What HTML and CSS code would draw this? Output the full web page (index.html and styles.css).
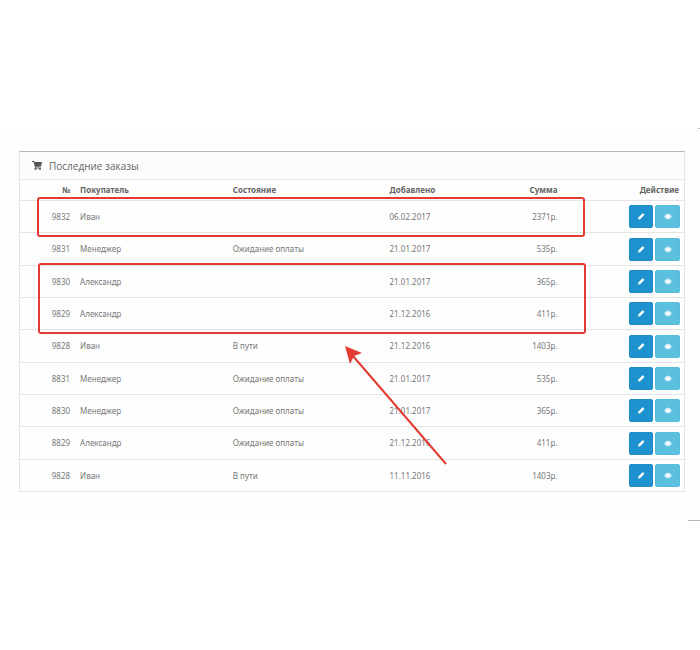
FILE: index.html
```html
<!DOCTYPE html>
<html lang="ru">
<head>
  <meta charset="UTF-8">
  <title>Последние заказы</title>
  <link rel="stylesheet" href="styles.css">
</head>
<body>
  <!-- иконки -->
  <svg class="sprite" aria-hidden="true">
    <symbol id="pencil" viewBox="0 0 16 16">
      <path d="M1 15l1-5 8-8 4 4-8 8zM10 2l1-1q1-1 2 0l2 2q1 1 0 2l-1 1z"/>
    </symbol>
    <symbol id="eye" viewBox="0 0 18 14">
      <path fill-opacity=".65" d="M0 7q4-7 9-7t9 7q-4 7-9 7T0 7z"/>
      <circle cx="9" cy="7" r="4"/>
    </symbol>
  </svg>

  <main class="content">
    <section class="panel">
      <header class="panel-heading">
        <svg class="cart" viewBox="0 0 20 18" aria-hidden="true">
          <path d="M0 0h4l1 2h15l-2 9-11 1v1h11v2H5l1-3L3 2H0z"/>
          <circle cx="7" cy="16" r="2"/>
          <circle cx="16" cy="16" r="2"/>
        </svg>
        <h3>Последние заказы</h3>
      </header>

      <table class="orders">
        <thead>
          <tr>
            <th class="col-id right">№</th>
            <th class="col-name">Покупатель</th>
            <th class="col-status">Состояние</th>
            <th class="col-date">Добавлено</th>
            <th class="col-sum right">Сумма</th>
            <th class="right">Действие</th>
          </tr>
        </thead>
        <tbody id="orders"></tbody>
      </table>

      <div class="mark mark-one"></div>
      <div class="mark mark-two"></div>
      <svg class="arrow" viewBox="0 0 104 120" aria-hidden="true">
        <path class="arrow-line" d="M8 10L101 118"/>
        <path class="arrow-head" d="M0 0l17 7-8 3-4 8z"/>
      </svg>
    </section>
    <span class="edge edge-top"></span>
    <span class="edge edge-bottom"></span>
  </main>

  <script src="script.js"></script>
</body>
</html>
```
FILE: styles.css
```css
* {
  box-sizing: border-box;
}

body {
  margin: 0;
  background: #fff;
  color: #666;
  font-family: "Noto Sans", "Open Sans", sans-serif;
  font-size: 8px;
  line-height: 12px;
}

.sprite {
  display: none;
}

.content {
  position: relative;
  margin-top: 128px;
  padding: 23px 15px 29px 19px;
  background: #fefefe;
}

.panel {
  position: relative;
  border: 1px solid #e4e4e4;
  border-top-color: #b4b4b4;
}

.panel-heading {
  display: flex;
  align-items: center;
  gap: 7px;
  height: 28px;
  padding: 0 12px;
  background: #fcfcfc;
  border-bottom: 1px solid #e8e8e8;
}

.panel-heading h3 {
  margin: 0;
  font-family: "Open Sans", "Noto Sans", sans-serif;
  font-size: 10px;
  font-weight: 400;
}

.cart {
  width: 10px;
  height: 9px;
  fill: #555;
}

.orders {
  width: 100%;
  border-collapse: collapse;
  table-layout: fixed;
}

.orders th,
.orders td {
  padding: 0 5px;
  text-align: left;
  white-space: nowrap;
  border-bottom: 1px solid #e4e4e4;
}

.orders tbody tr:last-child td {
  border-bottom: 0;
}

.orders th {
  height: 20px;
}

.orders td {
  height: 32px;
  padding-top: 1px;
  color: #777;
}

.orders tr:nth-child(3n+2) td {
  height: 33px;
}

.orders td:last-child {
  padding-right: 4px;
}

.orders .right {
  text-align: right;
}

.col-id { width: 8.3%; }
.col-name { width: 23%; }
.col-status { width: 23.6%; }
.col-date { width: 13%; }
.col-sum { width: 13.8%; }

.actions {
  display: flex;
  justify-content: flex-end;
  gap: 2px;
}

.btn {
  display: flex;
  align-items: center;
  justify-content: center;
  width: 24px;
  height: 23px;
  padding: 0;
  border: 1px solid #1d8bc7;
  border-radius: 2px;
  background: #1e91cf;
  cursor: pointer;
}

.btn svg {
  width: 8px;
  height: 7px;
  fill: #fff;
}

.btn-view {
  width: 25px;
  background: #5bc0de;
  border-color: #56bcdb;
}

/* выделение поверх таблицы */
.mark {
  position: absolute;
  left: 17px;
  right: 99px;
  border: 2px solid #e23c32;
  border-radius: 3px;
}

.mark-one {
  top: 45px;
  height: 40px;
}

.mark-two {
  top: 111px;
  left: 18px;
  right: 98px;
  height: 71px;
}

.arrow {
  position: absolute;
  top: 194px;
  left: 325px;
  width: 104px;
  height: 120px;
}

.arrow-line {
  fill: none;
  stroke: #e23c32;
  stroke-width: 2;
}

.arrow-head {
  fill: #e23c32;
}

.edge {
  position: absolute;
  right: 0;
  height: 1px;
  background: #b5b5bb;
}

.edge-top {
  top: 0;
  width: 2px;
}

.edge-bottom {
  bottom: 0;
  width: 12px;
}
```
FILE: script.js
```js
const orders = [
  ["9832", "Иван", "", "06.02.2017", "2371р."],
  ["9831", "Менеджер", "Ожидание оплаты", "21.01.2017", "535р."],
  ["9830", "Александр", "", "21.01.2017", "365р."],
  ["9829", "Александр", "", "21.12.2016", "411р."],
  ["9828", "Иван", "В пути", "21.12.2016", "1403р."],
  ["8831", "Менеджер", "Ожидание оплаты", "21.01.2017", "535р."],
  ["8830", "Менеджер", "Ожидание оплаты", "21.01.2017", "365р."],
  ["8829", "Александр", "Ожидание оплаты", "21.12.2016", "411р."],
  ["9828", "Иван", "В пути", "11.11.2016", "1403р."]
];

document.getElementById("orders").innerHTML = orders.map(([id, name, status, date, sum]) => `
  <tr>
    <td class="right">${id}</td>
    <td>${name}</td>
    <td>${status}</td>
    <td>${date}</td>
    <td class="right">${sum}</td>
    <td>
      <div class="actions">
        <button class="btn" type="button" aria-label="Редактировать"><svg><use href="#pencil"/></svg></button>
        <button class="btn btn-view" type="button" aria-label="Просмотр"><svg><use href="#eye"/></svg></button>
      </div>
    </td>
  </tr>`).join("");
```
